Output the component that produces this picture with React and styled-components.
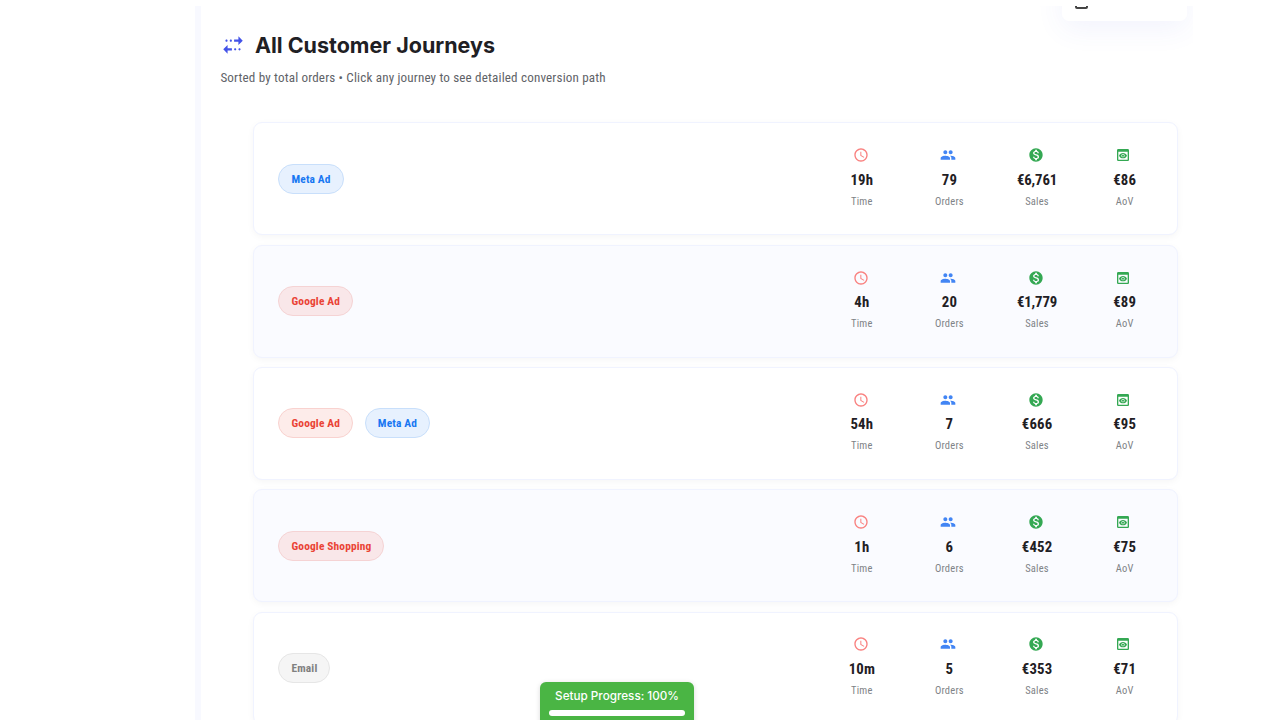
import React from "react";
import styled, { createGlobalStyle } from "styled-components";
import {
  MdAccessTime,
  MdMonetizationOn,
  MdMultipleStop,
  MdPeople,
  MdPreview,
} from "react-icons/md";

const GlobalStyle = createGlobalStyle`
  * {
    box-sizing: border-box;
  }

  body {
    margin: 0;
    background: #fff;
    font-family: "Roboto Condensed", Roboto, sans-serif;
    font-stretch: 75%;
    overflow: hidden;
  }
`;

const Page = styled.div`
  height: 720px;
  padding: 6px 87px 0 195.4px;
  overflow: hidden;
`;

const Panel = styled.main`
  position: relative;
  height: 714px;
  padding: 24px 15px 0 19px;
  border-left: 6px solid #f8f9ff;
  overflow: hidden;
`;

const Menu = styled.div`
  position: absolute;
  top: -34px;
  right: 6px;
  width: 125px;
  height: 49px;
  border-radius: 7px;
  background: #fff;
  box-shadow: 0 8px 29px rgba(67, 83, 230, 0.07);
`;

const MenuIcon = styled.div`
  position: absolute;
  left: 13px;
  bottom: 12px;
  width: 13px;
  height: 13px;
  border: 2px solid #444;
  border-radius: 2px;
`;

const Heading = styled.div`
  display: flex;
  align-items: center;
  gap: 8.5px;
  height: 30px;
  color: #4353e8;
`;

const Title = styled.h1`
  margin: 0;
  color: #1f2024;
  font: 700 21.5px/30px Inter, sans-serif;
`;

const Subtitle = styled.p`
  margin: 9px 0 35.4px;
  color: #5f6368;
  font-size: 13.1px;
  line-height: 18px;
  letter-spacing: 0.16px;
`;

const List = styled.div`
  display: flex;
  flex-direction: column;
  gap: 9.3px;
  padding-left: 32.6px;
`;

const Card = styled.div`
  display: flex;
  align-items: center;
  justify-content: space-between;
  flex: none;
  height: 113px;
  padding: 0 8.6px 0 24.5px;
  border: 1px solid #f0f3ff;
  border-radius: 9px;
  background: ${(p) => (p.$tinted ? "#fafbff" : "#fff")};
  box-shadow: 0 2px 7px rgba(0, 0, 0, 0.04);
`;

const Path = styled.div`
  display: flex;
  gap: 11.8px;
`;

const tones = {
  meta: { color: "#1877f2", bg: "#e7f1fe", border: "#c8dffb" },
  google: { color: "#ea4335", bg: "#fdecea", border: "#f9d2cf" },
  googleTinted: { color: "#ea4335", bg: "#f9e7e9", border: "#f5d3d4" },
  email: { color: "#808080", bg: "#f5f5f5", border: "#e6e6e6" },
};

const Pill = styled.span`
  height: 30px;
  padding: 0 12px;
  border: 1px solid ${(p) => tones[p.$tone].border};
  border-radius: 15px;
  background: ${(p) => tones[p.$tone].bg};
  color: ${(p) => tones[p.$tone].color};
  font-size: 11.4px;
  font-weight: 700;
  line-height: 29px;
  letter-spacing: 0.16px;
  white-space: nowrap;
`;

const Metrics = styled.div`
  display: grid;
  grid-template-columns: repeat(4, 87.6px);
`;

const Metric = styled.div`
  display: flex;
  flex-direction: column;
  align-items: center;
`;

const MetricIcon = styled.div`
  display: flex;
  height: 16px;
  margin: -0.6px 2.6px 6.6px 0;
  color: ${(p) => p.$color};
`;

const Value = styled.div`
  color: #1f2024;
  font-size: 14.8px;
  font-weight: 700;
  line-height: 20px;
  letter-spacing: ${(p) => (p.$long ? "-0.15px" : "0.15px")};
`;

const Label = styled.div`
  margin-top: 4px;
  color: #808387;
  font-size: 10.5px;
  line-height: 16px;
  letter-spacing: 0.2px;
`;

const Progress = styled.div`
  position: absolute;
  top: 682px;
  left: 540px;
  width: 154px;
  height: 48px;
  padding: 5px 9px 0;
  border-radius: 6px;
  background: #4ab544;
  box-shadow: 0 1px 5px rgba(0, 0, 0, 0.15);
  color: #fff;
  font: 500 11.7px/18px Inter, sans-serif;
  text-align: center;
  white-space: nowrap;
`;

const ProgressTrack = styled.div`
  height: 6.5px;
  margin-top: 4.5px;
  border-radius: 4px;
  background: #fff;
`;

const columns = [
  { key: "time", label: "Time", Icon: MdAccessTime, color: "#f9807f" },
  { key: "orders", label: "Orders", Icon: MdPeople, color: "#4285f4" },
  { key: "sales", label: "Sales", Icon: MdMonetizationOn, color: "#34a853" },
  { key: "aov", label: "AoV", Icon: MdPreview, color: "#34a853" },
];

const journeys = [
  { path: [["Meta Ad", "meta"]], time: "19h", orders: "79", sales: "€6,761", aov: "€86" },
  { path: [["Google Ad", "googleTinted"]], time: "4h", orders: "20", sales: "€1,779", aov: "€89" },
  {
    path: [
      ["Google Ad", "google"],
      ["Meta Ad", "meta"],
    ],
    time: "54h",
    orders: "7",
    sales: "€666",
    aov: "€95",
  },
  { path: [["Google Shopping", "googleTinted"]], time: "1h", orders: "6", sales: "€452", aov: "€75" },
  { path: [["Email", "email"]], time: "10m", orders: "5", sales: "€353", aov: "€71" },
];

export default function App() {
  return (
    <Page>
      <GlobalStyle />
      <Panel>
        <Heading>
          <MdMultipleStop size={26} />
          <Title>All Customer Journeys</Title>
        </Heading>
        <Subtitle>
          Sorted by total orders • Click any journey to see detailed conversion
          path
        </Subtitle>

        <List>
          {journeys.map((journey, i) => (
            <Card key={i} $tinted={i % 2 === 1}>
              <Path>
                {journey.path.map(([name, tone]) => (
                  <Pill key={name} $tone={tone}>
                    {name}
                  </Pill>
                ))}
              </Path>
              <Metrics>
                {columns.map(({ key, label, Icon, color }) => (
                  <Metric key={key}>
                    <MetricIcon $color={color}>
                      <Icon size={16} />
                    </MetricIcon>
                    <Value $long={journey[key].length > 4}>
                      {journey[key]}
                    </Value>
                    <Label>{label}</Label>
                  </Metric>
                ))}
              </Metrics>
            </Card>
          ))}
        </List>

        <Menu>
          <MenuIcon />
        </Menu>
      </Panel>

      {/* setup badge, floats over the list */}
      <Progress>
        Setup Progress: 100%
        <ProgressTrack />
      </Progress>
    </Page>
  );
}
